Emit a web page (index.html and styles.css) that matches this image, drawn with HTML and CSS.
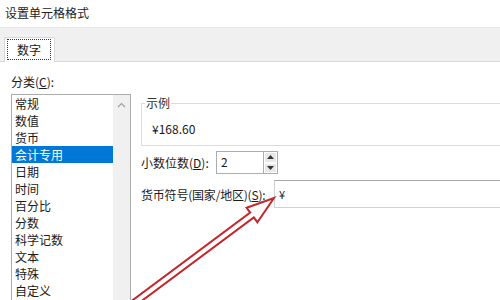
FILE: index.html
```html
<!DOCTYPE html>
<html lang="zh-CN">

<head>
    <meta charset="UTF-8">
    <title>设置单元格格式</title>
    <link rel="stylesheet" href="styles.css">
</head>

<body>
<div class="dialog">
    <div class="title">设置单元格格式</div>
    <div class="tabstrip">
        <div class="tab"><span class="tab-label">数字</span></div>
    </div>
    <div class="content">
        <div class="category">
            <div class="label">分类(<u>C</u>):</div>
            <div class="listbox">
                <ul class="items">
                    <li>常规</li>
                    <li>数值</li>
                    <li>货币</li>
                    <li class="selected">会计专用</li>
                    <li>日期</li>
                    <li>时间</li>
                    <li>百分比</li>
                    <li>分数</li>
                    <li>科学记数</li>
                    <li>文本</li>
                    <li>特殊</li>
                    <li>自定义</li>
                </ul>
                <div class="scrollbar">
                    <svg width="9" height="6" viewBox="0 0 9 6"><path d="M1 5 L4.5 1.5 L8 5" fill="none" stroke="#a0a0a0" stroke-width="1.2"/></svg>
                </div>
            </div>
        </div>
        <div class="options">
            <fieldset class="sample">
                <legend>示例</legend>
                <div class="sample-value">¥168.60</div>
            </fieldset>
            <div class="row">
                <span class="row-label decimals">小数位数(<u>D</u>):</span>
                <div class="spin">
                    <span class="spin-value">2</span>
                    <div class="spin-buttons">
                        <span class="spin-btn"><svg width="7" height="4" viewBox="0 0 7 4"><path d="M0 4 L3.5 0 L7 4 Z" fill="#333"/></svg></span>
                        <span class="spin-btn"><svg width="7" height="4" viewBox="0 0 7 4"><path d="M0 0 L3.5 4 L7 0 Z" fill="#333"/></svg></span>
                    </div>
                </div>
            </div>
            <div class="row symbol-row">
                <span class="row-label symbol">货币符号(国家/地区)(<u>S</u>):</span>
                <div class="select">¥</div>
            </div>
        </div>
    </div>
    <svg class="arrow" width="500" height="300" viewBox="0 0 500 300">
        <polygon points="274,198 257.4,222.2 253.8,217.4 126.3,312.4 122.7,307.6 250.2,212.6 246.6,207.8"
                 fill="none" stroke="#c3262b" stroke-width="2" stroke-linejoin="miter"/>
    </svg>
</div>
</body>
</html>
```

FILE: styles.css
```css
* {
    box-sizing: border-box;
}

html, body {
    margin: 0;
    background: #fff;
}

body {
    width: 500px;
    height: 300px;
    overflow: hidden;
    font-family: "Noto Sans CJK SC", "Noto Sans", sans-serif;
    font-size: 12px;
    color: #1a1a1a;
}

.dialog {
    position: relative;
    width: 500px;
    height: 300px;
    overflow: hidden;
}

u {
    text-decoration: underline;
    text-underline-offset: 1px;
}

.title {
    height: 27px;
    line-height: 26px;
    padding-left: 5px;
    color: #222;
}

/* 标签页条 */
.tabstrip {
    display: flex;
    align-items: flex-end;
    height: 35px;
    background: #f0f0f0;
    border-top: 1px solid #e8e8e8;
    border-bottom: 1px solid #d9d9d9;
    padding-left: 4px;
}

.tab {
    height: 25px;
    width: 51px;
    margin-bottom: -1px;
    padding: 1px 3px 2px 2px;
    background: #fff;
    border: 1px solid #d9d9d9;
    border-bottom: none;
}

.tab-label {
    display: flex;
    align-items: center;
    justify-content: center;
    height: 21px;
    border: 1px dotted #333;
}

.content {
    display: flex;
}

.category {
    flex-shrink: 0;
    width: 131px;
    padding-left: 11px;
}

.category .label {
    margin-top: 11px;
    height: 17px;
    line-height: 17px;
}

.listbox {
    display: flex;
    margin-top: 4px;
    height: 206px;
    border: 1px solid #acacac;
    border-bottom: none;
}

.items {
    flex-grow: 1;
    list-style: none;
    margin: 0;
    padding: 0;
}

.items li {
    height: 17px;
    line-height: 17px;
    padding-left: 3px;
}

.items .selected {
    background: #0078d7;
    color: #fff;
}

.scrollbar {
    width: 17px;
    background: #f0f0f0;
    display: flex;
    justify-content: center;
    align-items: flex-start;
    padding-top: 7px;
}

.options {
    flex-shrink: 0;
    width: 400px;
    margin-left: 10px;
    padding-top: 33px;
}

/* 示例分组框 */
.sample {
    margin: 0;
    padding: 0 0 8px 3px;
    border: 1px solid #dcdcdc;
    min-inline-size: 0;
}

.sample legend {
    padding: 0 1px;
    line-height: 16px;
    color: #333;
}

.sample-value {
    margin-top: 10px;
    margin-left: 7px;
    line-height: 16px;
}

.row {
    display: flex;
    align-items: center;
    margin-top: 5px;
}

.row-label {
    flex-shrink: 0;
}

.row-label.decimals {
    width: 75px;
}

.row-label.symbol {
    width: 133px;
    letter-spacing: -0.2px;
}

.spin {
    display: flex;
    height: 23px;
}

.spin-value {
    width: 47px;
    border: 1px solid #abadb3;
    border-right: none;
    padding-left: 4px;
    line-height: 20px;
}

.spin-buttons {
    display: flex;
    flex-direction: column;
    width: 15px;
    border: 1px solid #abadb3;
}

.spin-btn {
    flex-grow: 1;
    display: flex;
    align-items: center;
    justify-content: center;
    background: #e8e8e8;
    border: 1px solid #fff;
}

.symbol-row {
    margin-top: 6px;
}

.select {
    width: 260px;
    height: 28px;
    line-height: 26px;
    padding-left: 4px;
    border: 1px solid #d0d0d0;
    border-top-color: #a8a8a8;
    font-size: 11px;
}

.arrow {
    position: absolute;
    left: 0;
    top: 0;
    pointer-events: none;
}
```
